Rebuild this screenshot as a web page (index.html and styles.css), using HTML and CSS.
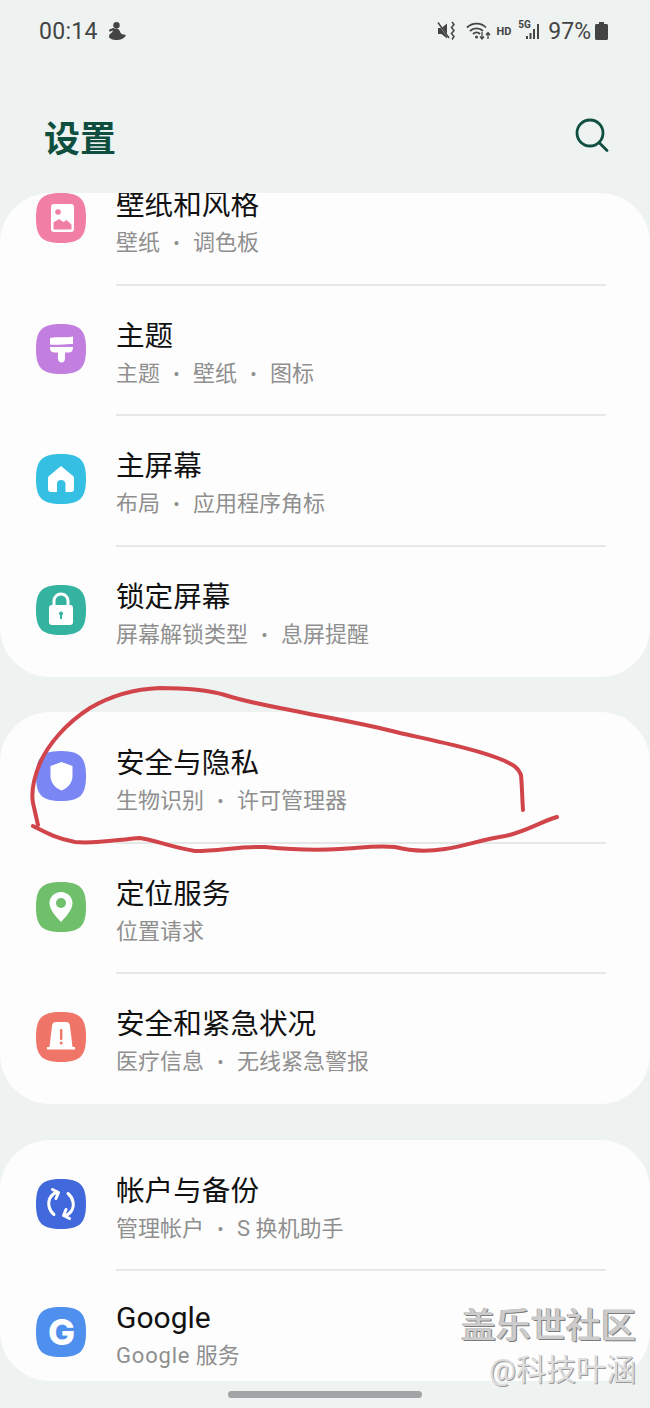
FILE: index.html
```html
<!DOCTYPE html>
<html lang="zh">
	<head>
		<title>设置</title>
		<meta name="viewport" content="width=device-width, initial-scale=1.0">
		<link rel="stylesheet" href="styles.css">
	</head>
	<body>
		<div class="screen">
			<div class="statusbar">
				<span class="clock">00:14</span>
				<svg class="st-notif" viewBox="0 0 20 18" width="20" height="18"><circle cx="9.500" cy="3.200" r="3.200" fill="#444"/><path d="M6 7.500C8 5.800 11.500 6 12.500 8.500 13.300 11 14.500 12.700 17.500 12.500L19 13.500C17 16.500 13.500 18 10 18 5.500 18 2 17 2 14.300 2 11.500 6 11 6 7.500z" fill="#444"/><path d="M3 8.500L6.500 7" stroke="#444" stroke-width="2" stroke-linecap="round"/></svg>
				<div class="status-right">
					<svg class="st-mute" viewBox="0 0 20 20" width="20" height="20"><path d="M1 7h3.500L10 2.500v15L4.500 13H1z" fill="#444"/><path d="M1 2l11 15" stroke="#eef2f1" stroke-width="1.500"/><path d="M1 1.500l11 15.500" stroke="#444" stroke-width="1.500"/><path d="M15 1l2 2.500-2.500 3 2.500 3-2.500 3 2.500 3-2 3" fill="none" stroke="#444" stroke-width="1.500"/></svg>
					<svg class="st-wifi" viewBox="0 0 26 20" width="26" height="20"><g fill="none" stroke="#444" stroke-width="1.800"><path d="M1 6.500C6 1.500 15 1 20 6.500"/><path d="M4 10c3.500-3.500 9.500-3.500 13 0"/><path d="M7 13c2-2 5-2 7 0"/></g><circle cx="10.500" cy="16" r="1.500" fill="#444"/><path d="M16 11v7m-2-2.500l2 2.500 2-2.500M22 18v-6m-2 2l2-2.500 2 2.500" fill="none" stroke="#444" stroke-width="1.300"/></svg>
					<span class="st-hd">HD</span>
					<div class="st-signal">
						<span class="st-5g">5G</span>
						<svg viewBox="0 0 16 18" width="16" height="18"><g fill="#444"><rect x="0" y="14" width="2" height="3"/><rect x="3.500" y="11" width="2" height="6"/><rect x="7" y="7" width="2" height="10"/><rect x="11" y="2" width="2" height="15"/></g></svg>
					</div>
					<span class="st-batt">97%</span>
					<svg class="st-battery" viewBox="0 0 13 18" width="13" height="18"><path d="M4 0h5v2h2.500c.8 0 1.500.6 1.500 1.500v13c0 .8-.7 1.500-1.500 1.500h-10C.7 18 0 17.300 0 16.500v-13C0 2.600.7 2 1.500 2H4z" fill="#444"/></svg>
				</div>
			</div>

			<div class="header">
				<h1>设置</h1>
				<svg class="search" viewBox="0 0 34 34" width="34" height="34"><circle cx="15" cy="15" r="13" fill="none" stroke="#0f4f40" stroke-width="2.800"/><path d="M24 24.500l8 8" stroke="#0f4f40" stroke-width="2.800" stroke-linecap="round"/></svg>
			</div>

			<div class="card card-top">
				<div class="row">
					<svg class="icon" viewBox="0 0 50 50"><path d="M25 0C44 0 50 6 50 25S44 50 25 50 0 44 0 25 6 0 25 0z" fill="#f17fa5"/><rect x="15" y="11" width="23" height="28" rx="3" fill="#fff"/><circle cx="22" cy="19" r="2.800" fill="#f17fa5"/><path d="M17.500 36.500v-7l5.500-3.500 4.500 3 3-2 5 4.500v5z" fill="#f17fa5"/></svg>
					<div class="row-body">
						<div class="title">壁纸和风格</div>
						<div class="sub">壁纸<span class="dot">•</span>调色板</div>
					</div>
				</div>
				<div class="row">
					<svg class="icon" viewBox="0 0 50 50"><path d="M25 0C44 0 50 6 50 25S44 50 25 50 0 44 0 25 6 0 25 0z" fill="#c27fe0"/><path d="M14 14c6-2 10 .5 23-1.500V20c-7-.5-15 1.500-23 .5z" fill="#fff"/><path d="M14 23h23v1c0 3-2 4.500-4.500 4.500H29v6c0 2.500-1.500 4-3.500 4s-3.500-1.500-3.500-4v-6h-3.500C16 28.500 14 27 14 24z" fill="#fff"/></svg>
					<div class="row-body">
						<div class="title">主题</div>
						<div class="sub">主题<span class="dot">•</span>壁纸<span class="dot">•</span>图标</div>
					</div>
				</div>
				<div class="row">
					<svg class="icon" viewBox="0 0 50 50"><path d="M25 0C44 0 50 6 50 25S44 50 25 50 0 44 0 25 6 0 25 0z" fill="#35bfe3"/><path d="M25 12L37 22c.8.700 1 1.500 1 2.500V35c0 2-1 3-3 3H15c-2 0-3-1-3-3V24.500c0-1 .2-1.800 1-2.500z" fill="#fff"/><path d="M21 38V30c0-2.500 1.500-4 4-4s4.500 1.500 4.500 4v8z" fill="#35bfe3"/></svg>
					<div class="row-body">
						<div class="title">主屏幕</div>
						<div class="sub">布局<span class="dot">•</span>应用程序角标</div>
					</div>
				</div>
				<div class="row">
					<svg class="icon" viewBox="0 0 50 50"><path d="M25 0C44 0 50 6 50 25S44 50 25 50 0 44 0 25 6 0 25 0z" fill="#34b3a0"/><path d="M18 21v-5c0-4 3-7 7-7s7 3 7 7v5" fill="none" stroke="#fff" stroke-width="3"/><rect x="13" y="20" width="24" height="20" rx="3" fill="#fff"/><circle cx="25" cy="28.500" r="2" fill="#34b3a0"/><rect x="24" y="29" width="2" height="5" fill="#34b3a0"/></svg>
					<div class="row-body last">
						<div class="title">锁定屏幕</div>
						<div class="sub">屏幕解锁类型<span class="dot">•</span>息屏提醒</div>
					</div>
				</div>
			</div>

			<div class="card">
				<div class="row">
					<svg class="icon" viewBox="0 0 50 50"><path d="M25 0C44 0 50 6 50 25S44 50 25 50 0 44 0 25 6 0 25 0z" fill="#7b86f5"/><path d="M25.500 11l11 4v10c0 7-5 12-11 14.500C19.500 37 14.500 32 14.500 25V15z" fill="#fff"/></svg>
					<div class="row-body">
						<div class="title">安全与隐私</div>
						<div class="sub">生物识别<span class="dot">•</span>许可管理器</div>
					</div>
				</div>
				<div class="row">
					<svg class="icon" viewBox="0 0 50 50"><path d="M25 0C44 0 50 6 50 25S44 50 25 50 0 44 0 25 6 0 25 0z" fill="#6fbf6b"/><path d="M25 10c6.500 0 11.500 5 11.500 11 0 7-7 14-11.500 19C20.500 35 13.500 28 13.500 21c0-6 5-11 11.500-11z" fill="#fff"/><circle cx="25" cy="21" r="5" fill="#6fbf6b"/></svg>
					<div class="row-body">
						<div class="title">定位服务</div>
						<div class="sub">位置请求</div>
					</div>
				</div>
				<div class="row">
					<svg class="icon" viewBox="0 0 50 50"><path d="M25 0C44 0 50 6 50 25S44 50 25 50 0 44 0 25 6 0 25 0z" fill="#ef7569"/><path d="M20 10h10c2.500 0 3.500 1 4 4l2.500 21H39v2.500H11V35h2.500L16 14c.5-3 1.500-4 4-4z" fill="#fff"/><rect x="24" y="17" width="2.400" height="11" rx="1" fill="#ef7569"/><circle cx="25.200" cy="31" r="1.500" fill="#ef7569"/></svg>
					<div class="row-body last">
						<div class="title">安全和紧急状况</div>
						<div class="sub">医疗信息<span class="dot">•</span>无线紧急警报</div>
					</div>
				</div>
			</div>

			<div class="card card-bottom">
				<div class="row">
					<svg class="icon" viewBox="0 0 50 50"><path d="M25 0C44 0 50 6 50 25S44 50 25 50 0 44 0 25 6 0 25 0z" fill="#4169dc"/><g fill="none" stroke="#fff" stroke-width="3" stroke-linecap="round" stroke-linejoin="round"><path d="M18 35.500C12.500 31 11 23 15 17.500 16.500 15.500 18 14 21 13.500"/><path d="M16.500 10.500L22.500 13.500 20 19.500"/><g transform="rotate(180 25 25)"><path d="M18 35.500C12.500 31 11 23 15 17.500 16.500 15.500 18 14 21 13.500"/><path d="M16.500 10.500L22.500 13.500 20 19.500"/></g></g></svg>
					<div class="row-body">
						<div class="title">帐户与备份</div>
						<div class="sub">管理帐户<span class="dot">•</span>S 换机助手</div>
					</div>
				</div>
				<div class="row row-google">
					<svg class="icon" viewBox="0 0 50 50"><path d="M25 0C44 0 50 6 50 25S44 50 25 50 0 44 0 25 6 0 25 0z" fill="#4f8fee"/><text class="g-mark" x="25.500" y="38" text-anchor="middle">G</text></svg>
					<div class="row-body last">
						<div class="title">Google</div>
						<div class="sub"><span class="latin">Google</span> 服务</div>
					</div>
				</div>
			</div>

			<div class="home-bar"></div>

			<svg class="scribble" viewBox="0 0 650 1408" width="650" height="1408">
				<path d="M523 810C522 795 522 785 521 775C518 766 510 764 505 761C480 750 440 742 400 733C365 724 335 719 300 712C270 706 250 703 225 695C205 689 185 688 160 688C135 689 112 695 90 708C65 724 48 745 40 763C33 780 31 792 33 803L38 825"/>
				<path d="M33 826C45 832 55 838 75 842C95 844 115 840 140 838C155 840 170 847 195 851C220 851 240 846 265 847C285 849 310 851 340 849C360 848 375 845 395 847C410 851 425 852 445 849C465 846 480 840 505 836C525 832 540 822 557 817"/>
			</svg>

			<div class="watermark">
				<div class="wm-name">盖乐世社区</div>
				<div class="wm-user">@科技叶涵</div>
			</div>
		</div>
	</body>
</html>
```

FILE: styles.css
```css
body {
	margin: 0px;
	font-family: Roboto, "Noto Sans CJK SC", sans-serif;
	background-color: #eef2f1;
}
.screen {
	position: relative;
	width: 650px;
	height: 1408px;
	overflow: hidden;
	background-color: #eef2f1;
}

.statusbar {
	display: flex;
	align-items: center;
	height: 62px;
	padding: 0px 42px 0px 39px;
	color: #444444;
}
.clock {
	font-size: 23px;
	letter-spacing: 0.3px;
}
.st-notif {
	margin-left: 9px;
}
.status-right {
	display: flex;
	align-items: center;
	margin-left: auto;
}
.st-wifi {
	margin-left: 9px;
}
.st-hd {
	margin-left: 4px;
	font-size: 11px;
	font-weight: 700;
}
.st-signal {
	position: relative;
	display: flex;
	justify-content: flex-end;
	width: 24px;
	margin-left: 7px;
}
.st-5g {
	position: absolute;
	left: 0px;
	top: -3px;
	font-size: 10px;
	font-weight: 700;
}
.st-batt {
	margin-left: 6px;
	font-size: 23px;
}
.st-battery {
	margin-left: 4px;
}

.header {
	display: flex;
	align-items: center;
	justify-content: space-between;
	height: 131px;
	padding: 16px 41px 0px 44px;
	box-sizing: border-box;
}
.header h1 {
	margin: 0px;
	font-size: 36px;
	font-weight: 700;
	color: #0f4f40;
}
.search {
	margin-bottom: 2px;
}

.card {
	margin-bottom: 35.5px;
	border-radius: 50px;
	background-color: #fdfdfd;
	overflow: hidden;
}
.card-bottom {
	height: 241px;
}
.row {
	display: flex;
	height: 130.67px;
	padding: 0px 44px 0px 36px;
	box-sizing: border-box;
}
.card-top .row:first-child {
	margin-top: -39px;
}
.icon {
	flex: none;
	width: 50px;
	height: 50px;
	margin-top: 39px;
	margin-right: 30px;
}
.row-google .icon {
	margin-top: 37px;
}
.g-mark {
	font-family: Inter, sans-serif;
	font-size: 36px;
	font-weight: 800;
	fill: #ffffff;
}
.row-body {
	flex: 1;
	margin-bottom: -1px;
	padding-top: 31px;
	box-sizing: border-box;
	border-bottom: 2px solid #e6e8e8;
}
.row-body.last {
	border-bottom: none;
}
.row-google .row-body {
	padding-top: 28px;
}
.title {
	font-size: 28.6px;
	line-height: 40px;
	color: #111111;
}
.row-google .title {
	font-size: 30px;
}
.sub {
	font-size: 22px;
	line-height: 36px;
	color: #8f8f8f;
}
.latin {
	letter-spacing: 0.8px;
}
.dot {
	display: inline-block;
	width: 33px;
	text-align: center;
	font-size: 19px;
}

.home-bar {
	position: absolute;
	left: 228px;
	top: 1391px;
	width: 194px;
	height: 7px;
	border-radius: 4px;
	background-color: #a0a4a4;
}

/* hand drawn red mark on top of the screenshot */
.scribble {
	position: absolute;
	left: 0px;
	top: 0px;
	pointer-events: none;
}
.scribble path {
	fill: none;
	stroke: #d0444a;
	stroke-width: 4;
	stroke-linecap: round;
	stroke-linejoin: round;
}

.watermark {
	position: absolute;
	right: 14px;
	top: 1305px;
	text-align: right;
	color: #cccccc;
	text-shadow: 1px 1px 0px #7c7c7c, -1px 0px 0px #b4b4b4;
}
.wm-name {
	font-size: 35px;
	font-weight: 500;
	line-height: 44px;
}
.wm-user {
	font-size: 30px;
	line-height: 42px;
	color: #dddddd;
	text-shadow: 1px 1px 0px #9a9a9a;
}
```
